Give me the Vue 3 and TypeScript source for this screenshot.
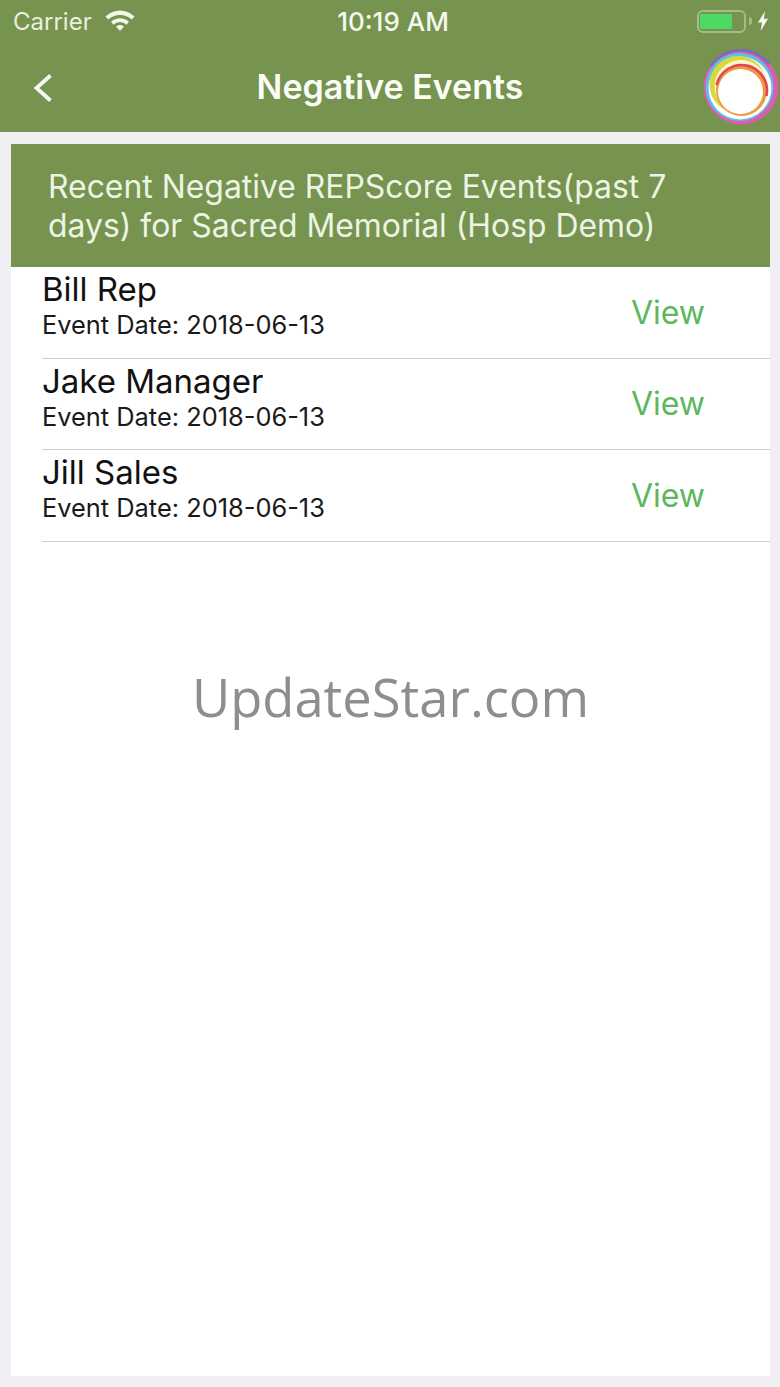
<template>
  <div class="screen">
    <header class="top">
      <div class="status">
        <div class="status-left">
          <span class="carrier">Carrier</span>
          <svg class="wifi" width="30" height="22" viewBox="0 0 30 22">
            <path d="M0.5 7.5C8.5 -0.6 21.5 -0.6 29.5 7.5L26.8 10.6C20.2 4.4 9.8 4.4 3.2 10.6Z" fill="#f2f7ea" />
            <path d="M6 12.8C11 8 19 8 24 12.8L21.4 15.8C17.6 12.2 12.4 12.2 8.6 15.8Z" fill="#f2f7ea" />
            <path d="M11 17.6C13.4 15.5 16.6 15.5 19 17.6L15 22Z" fill="#f2f7ea" />
          </svg>
        </div>
        <span class="clock">10:19 AM</span>
        <div class="status-right">
          <div class="battery"><div class="level" :style="{ width: batteryLevel + '%' }"></div></div>
          <span class="nub"></span>
          <svg width="12" height="20" viewBox="0 0 12 20">
            <path d="M8 0L1 11.5H5L3.6 20L11 7.8H6.8Z" fill="#f4f8ee" />
          </svg>
        </div>
      </div>
      <div class="nav">
        <svg class="back" width="24" height="32" viewBox="0 0 24 32">
          <path d="M20.5 3.5L6.5 16L20.5 28.5" fill="none" stroke="#f4f8ee" stroke-width="3.8" />
        </svg>
        <h1 class="title">Negative Events</h1>
        <svg class="logo" width="76" height="76" viewBox="0 0 76 76">
          <circle cx="38" cy="38" r="37.5" fill="#dc5cae" />
          <path d="M8 17A36 36 0 0 1 66 15" fill="none" stroke="#7a6cb8" stroke-width="3" />
          <circle cx="36.5" cy="38" r="34" fill="#5bc2e6" />
          <circle cx="37" cy="39" r="31.5" fill="#fff" />
          <circle cx="35" cy="35.5" r="28.5" fill="#d6d83e" />
          <circle cx="38" cy="37.5" r="26.5" fill="#fbf6c9" />
          <circle cx="38.5" cy="41.5" r="25.5" fill="#f09a3e" />
          <path d="M13.6 36A25.5 25.5 0 0 1 63.4 47" fill="none" stroke="#e0475a" stroke-width="2.6" />
          <circle cx="37.5" cy="42.5" r="22.5" fill="#fff" />
        </svg>
      </div>
    </header>

    <main class="card">
      <div class="banner">Recent Negative REPScore Events(past 7 days) for Sacred Memorial (Hosp Demo)</div>
      <ul class="list">
        <li v-for="ev in events" :key="ev.name" class="row">
          <div class="who">
            <div class="name">{{ ev.name }}</div>
            <div class="date">Event Date: {{ ev.date }}</div>
          </div>
          <span class="view">View</span>
        </li>
      </ul>
      <div class="watermark">UpdateStar.com</div>
    </main>
  </div>
</template>

<script setup lang="ts">
interface NegativeEvent {
  name: string;
  date: string;
}

const batteryLevel = 74;

const events: NegativeEvent[] = [
  { name: 'Bill Rep', date: '2018-06-13' },
  { name: 'Jake Manager', date: '2018-06-13' },
  { name: 'Jill Sales', date: '2018-06-13' },
];
</script>

<style>
html,
body {
  margin: 0;
  background: #efeff4;
}
</style>

<style scoped>
.screen {
  width: 780px;
  height: 1387px;
  background: #efeff4;
  font-family: Inter, 'Liberation Sans', sans-serif;
  display: flex;
  flex-direction: column;
  overflow: hidden;
}

.top {
  height: 132px;
  background: #769350;
  flex-shrink: 0;
  color: #f4f8ee;
}

.status {
  height: 42px;
  padding: 0 11px 0 13px;
  display: grid;
  grid-template-columns: 1fr auto 1fr;
  align-items: center;
  font-size: 24px;
}

.status-left {
  display: flex;
  align-items: center;
  gap: 13px;
}

.carrier {
  color: #e8f0dc;
}

.wifi {
  margin-top: -2px;
}

.clock {
  font-size: 26px;
  font-weight: 500;
  margin-left: 4px;
}

.status-right {
  display: flex;
  align-items: center;
  justify-content: flex-end;
}

.battery {
  width: 49px;
  height: 23px;
  box-sizing: border-box;
  border: 2px solid #a5bb8a;
  border-radius: 6px;
  padding: 2px 1px;
}

.level {
  height: 100%;
  background: #4cd964;
  border-radius: 1px;
}

.nub {
  width: 3px;
  height: 8px;
  background: #a5bb8a;
  border-radius: 0 3px 3px 0;
  margin: 0 5px 0 3px;
}

.nav {
  height: 90px;
  display: flex;
  align-items: center;
  justify-content: center;
  position: relative;
}

.back {
  position: absolute;
  left: 30px;
  top: 30px;
}

.title {
  margin: -2px 0 0;
  font-size: 34px;
  font-weight: 600;
  color: #fafcf6;
}

.logo {
  position: absolute;
  right: 1px;
  top: 7px;
}

.card {
  position: relative;
  flex: 1;
  margin: 12px 10px 11px 11px;
  background: #fff;
}

.banner {
  height: 123px;
  box-sizing: border-box;
  padding: 23px 90px 0 37px;
  background: #769350;
  color: #ecf4e3;
  font-size: 31.9px;
  line-height: 39px;
}

.list {
  list-style: none;
  margin: 0;
  padding: 0 0 0 31px;
}

.row {
  height: 91.5px;
  box-sizing: border-box;
  border-bottom: 1px solid #cfcfcf;
  display: flex;
  align-items: center;
  justify-content: space-between;
  padding-right: 65px;
}

.who {
  margin-top: -14px;
}

.name {
  font-size: 33px;
  line-height: 40px;
  color: #111;
}

.date {
  font-size: 25.4px;
  line-height: 32px;
  color: #1a1a1a;
}

.view {
  font-size: 32px;
  color: #5cb85c;
}

.watermark {
  position: absolute;
  left: 0;
  right: 0;
  top: 518px;
  text-align: center;
  font-family: 'Open Sans', sans-serif;
  font-weight: 400;
  font-size: 52.5px;
  line-height: 70px;
  color: #8e8e8e;
}
</style>
